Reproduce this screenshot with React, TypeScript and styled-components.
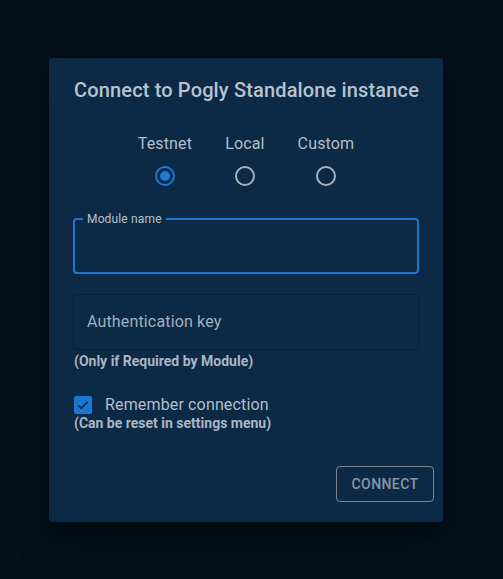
import React from "react";
import styled, { createGlobalStyle } from "styled-components";

const Global = createGlobalStyle`
  html, body { margin: 0; padding: 0; background: #04111c; }
  body { font-family: Roboto, "Liberation Sans", sans-serif; }
  * { box-sizing: border-box; }
`;

const Page = styled.div`
  width: 503px;
  height: 579px;
  background: #04111c;
  padding: 58px 0 0 49px;
`;

const Dialog = styled.div`
  width: 394px;
  height: 464px;
  background: #0c2946;
  border-radius: 4px;
  box-shadow: 0 11px 15px -7px rgba(0,0,0,0.2), 0 24px 38px 3px rgba(0,0,0,0.14), 0 9px 46px 8px rgba(0,0,0,0.12);
  display: flex;
  flex-direction: column;
`;

const Title = styled.h2`
  margin: 0;
  padding: 16px 24px 0 25px;
  font-size: 20px;
  font-weight: 500;
  line-height: 32px;
  letter-spacing: 0.15px;
  color: #b7c3cf;
  white-space: nowrap;
`;

const Content = styled.div`
  padding: 0 24px;
  display: flex;
  flex-direction: column;
`;

const RadioGroup = styled.div`
  margin-top: 26px;
  display: flex;
  justify-content: center;
  gap: 33px;
`;

const RadioItem = styled.label`
  display: flex;
  flex-direction: column;
  align-items: center;
`;

const RadioLabel = styled.span`
  font-size: 16px;
  line-height: 24px;
  letter-spacing: 0.15px;
  color: #b3bfcb;
`;

const RadioBox = styled.span`
  width: 38px;
  height: 38px;
  margin-top: 1px;
  display: flex;
  align-items: center;
  justify-content: center;
`;

const Radio = ({ checked }: { checked?: boolean }) => (
  <RadioBox>
    <svg width="20" height="20" viewBox="0 0 20 20">
      <circle cx="10" cy="10" r="9" fill="none" stroke={checked ? "#1c7ad8" : "#a9b4bf"} strokeWidth="2" />
      {checked && <circle cx="10" cy="10" r="5" fill="#1c7ad8" />}
    </svg>
  </RadioBox>
);

const Field = styled.div<{ $focused?: boolean; $mt: number }>`
  position: relative;
  margin-top: ${p => p.$mt}px;
  height: 56px;
  border-radius: 4px;
  border: ${p => (p.$focused ? "2px solid #1c76d2" : "1px solid #081e33")};
  display: flex;
  align-items: center;
  padding-left: ${p => (p.$focused ? 12 : 13)}px;
`;

const FloatLabel = styled.span`
  position: absolute;
  top: -9px;
  left: 8px;
  padding: 0 4px;
  background: #0c2946;
  font-size: 12px;
  line-height: 16px;
  letter-spacing: 0.15px;
  color: #b6c2ce;
`;

const Placeholder = styled.span`
  font-size: 16px;
  line-height: 24px;
  letter-spacing: 0.15px;
  color: #a2b0be;
`;

const Helper = styled.div<{ $mt: number }>`
  margin-top: ${p => p.$mt}px;
  font-size: 14px;
  font-weight: 700;
  line-height: 20px;
  color: #a9b7c5;
  padding-left: 1px;
`;

const CheckRow = styled.label`
  margin-top: 19px;
  height: 30px;
  display: flex;
  align-items: center;
  gap: 13px;
  padding-left: 1px;
`;

const CheckBox = styled.span`
  width: 18px;
  height: 18px;
  border-radius: 2px;
  background: #1c76d2;
  display: flex;
  align-items: center;
  justify-content: center;
`;

const CheckText = styled.span`
  font-size: 16px;
  line-height: 24px;
  letter-spacing: 0.15px;
  color: #b3bfcb;
`;

const Actions = styled.div`
  margin-top: auto;
  padding: 0 9px 20px 0;
  display: flex;
  justify-content: flex-end;
`;

const Button = styled.button`
  width: 98px;
  height: 36px;
  border: 1px solid #7d858d;
  border-radius: 4px;
  background: transparent;
  font-family: Roboto, "Liberation Sans", sans-serif;
  font-size: 14px;
  font-weight: 500;
  letter-spacing: 0.4px;
  text-transform: uppercase;
  color: #8a96a2;
  padding: 0;
`;

export default function App() {
  return (
    <>
      <Global />
      <Page>
        <Dialog>
          <Title>Connect to Pogly Standalone instance</Title>
          <Content>
            <RadioGroup>
              <RadioItem>
                <RadioLabel>Testnet</RadioLabel>
                <Radio checked />
              </RadioItem>
              <RadioItem>
                <RadioLabel>Local</RadioLabel>
                <Radio />
              </RadioItem>
              <RadioItem>
                <RadioLabel>Custom</RadioLabel>
                <Radio />
              </RadioItem>
            </RadioGroup>
            <Field $focused $mt={23}>
              <FloatLabel>Module name</FloatLabel>
            </Field>
            <Field $mt={20}>
              <Placeholder>Authentication key</Placeholder>
            </Field>
            <Helper $mt={1}>(Only if Required by Module)</Helper>
            <CheckRow>
              <CheckBox>
                <svg width="14" height="14" viewBox="0 0 24 24">
                  <path d="M4 12.5l5 5L20 6.5" fill="none" stroke="#0c2946" strokeWidth="3" />
                </svg>
              </CheckBox>
              <CheckText>Remember connection</CheckText>
            </CheckRow>
            <Helper $mt={-7}>(Can be reset in settings menu)</Helper>
          </Content>
          <Actions>
            <Button>Connect</Button>
          </Actions>
        </Dialog>
      </Page>
    </>
  );
}
